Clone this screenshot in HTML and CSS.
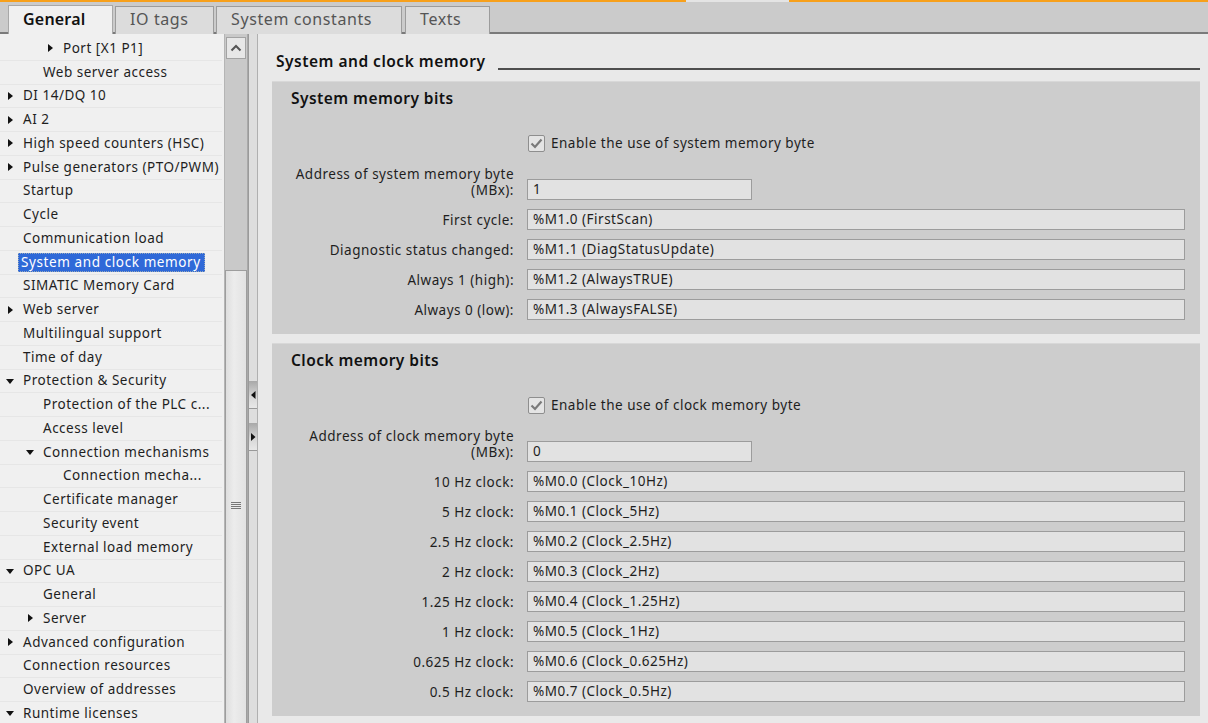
FILE: index.html
```html
<!DOCTYPE html>
<html>
<head>
<meta charset="utf-8">
<link rel="stylesheet" href="styles.css">
</head>
<body>
<div class="app">
  <div class="accent">
    <div class="accent-seg accent-left"></div>
    <div class="accent-seg accent-gap"></div>
    <div class="accent-seg accent-right"></div>
  </div>
  <div class="tabbar">
    <div class="tab tab-active tab-general">General</div>
    <div class="tab tab-io">IO tags</div>
    <div class="tab tab-sys">System constants</div>
    <div class="tab tab-texts">Texts</div>
  </div>
  <div class="main">
    <div class="sidebar">
      <ul class="tree">
        <li class="node l2"><span class="tw right"></span><span class="txt">Port [X1 P1]</span></li>
        <li class="node l1"><span class="tw"></span><span class="txt">Web server access</span></li>
        <li class="node l0"><span class="tw right"></span><span class="txt">DI 14/DQ 10</span></li>
        <li class="node l0"><span class="tw right"></span><span class="txt">AI 2</span></li>
        <li class="node l0"><span class="tw right"></span><span class="txt">High speed counters (HSC)</span></li>
        <li class="node l0"><span class="tw right"></span><span class="txt">Pulse generators (PTO/PWM)</span></li>
        <li class="node l0"><span class="tw"></span><span class="txt">Startup</span></li>
        <li class="node l0"><span class="tw"></span><span class="txt">Cycle</span></li>
        <li class="node l0"><span class="tw"></span><span class="txt">Communication load</span></li>
        <li class="node l0"><span class="tw"></span><span class="txt selected">System and clock memory</span></li>
        <li class="node l0"><span class="tw"></span><span class="txt">SIMATIC Memory Card</span></li>
        <li class="node l0"><span class="tw right"></span><span class="txt">Web server</span></li>
        <li class="node l0"><span class="tw"></span><span class="txt">Multilingual support</span></li>
        <li class="node l0"><span class="tw"></span><span class="txt">Time of day</span></li>
        <li class="node l0"><span class="tw down"></span><span class="txt">Protection &amp; Security</span></li>
        <li class="node l1"><span class="tw"></span><span class="txt">Protection of the PLC c...</span></li>
        <li class="node l1"><span class="tw"></span><span class="txt">Access level</span></li>
        <li class="node l1"><span class="tw down"></span><span class="txt">Connection mechanisms</span></li>
        <li class="node l2"><span class="tw"></span><span class="txt">Connection mecha...</span></li>
        <li class="node l1"><span class="tw"></span><span class="txt">Certificate manager</span></li>
        <li class="node l1"><span class="tw"></span><span class="txt">Security event</span></li>
        <li class="node l1"><span class="tw"></span><span class="txt">External load memory</span></li>
        <li class="node l0"><span class="tw down"></span><span class="txt">OPC UA</span></li>
        <li class="node l1"><span class="tw"></span><span class="txt">General</span></li>
        <li class="node l1"><span class="tw right"></span><span class="txt">Server</span></li>
        <li class="node l0"><span class="tw right"></span><span class="txt">Advanced configuration</span></li>
        <li class="node l0"><span class="tw"></span><span class="txt">Connection resources</span></li>
        <li class="node l0"><span class="tw"></span><span class="txt">Overview of addresses</span></li>
        <li class="node l0"><span class="tw down"></span><span class="txt">Runtime licenses</span></li>
      </ul>
    </div>
    <div class="vscroll">
      <div class="sbtn">
        <svg width="12" height="8" viewBox="0 0 12 8"><path d="M1.5 6.5 L6 2 L10.5 6.5" fill="none" stroke="#555" stroke-width="2"/></svg>
      </div>
      <div class="track"></div>
      <div class="thumb">
        <div class="grip"><span></span><span></span><span></span><span></span></div>
      </div>
    </div>
    <div class="splitter">
      <div class="split-btns">
        <div class="split-btn"><svg width="5" height="8" viewBox="0 0 5 8"><path d="M4.5 0 L0 4 L4.5 8 Z" fill="#111"/></svg></div>
        <div class="split-btn"><svg width="5" height="8" viewBox="0 0 5 8"><path d="M0 0 L4.5 4 L0 8 Z" fill="#111"/></svg></div>
      </div>
    </div>
    <div class="content">
      <div class="heading">
        <span class="heading-text">System and clock memory</span>
        <span class="heading-line"></span>
      </div>

      <section class="group">
        <div class="group-title">System memory bits</div>
        <div class="form">
          <div class="cell-empty"></div>
          <label class="check">
            <span class="box"><svg width="13" height="11" viewBox="0 0 13 11"><path d="M1.5 5.5 L5 9 L11.5 1.5" fill="none" stroke="#7a7a7a" stroke-width="2.2"/></svg></span>
            <span>Enable the use of system memory byte</span>
          </label>
          <div class="lbl lbl-2">Address of system memory byte<br>(MBx):</div>
          <div class="inp inp-short">1</div>
          <div class="lbl">First cycle:</div>
          <div class="inp">%M1.0 (FirstScan)</div>
          <div class="lbl">Diagnostic status changed:</div>
          <div class="inp">%M1.1 (DiagStatusUpdate)</div>
          <div class="lbl">Always 1 (high):</div>
          <div class="inp">%M1.2 (AlwaysTRUE)</div>
          <div class="lbl">Always 0 (low):</div>
          <div class="inp">%M1.3 (AlwaysFALSE)</div>
        </div>
      </section>

      <section class="group">
        <div class="group-title">Clock memory bits</div>
        <div class="form">
          <div class="cell-empty"></div>
          <label class="check">
            <span class="box"><svg width="13" height="11" viewBox="0 0 13 11"><path d="M1.5 5.5 L5 9 L11.5 1.5" fill="none" stroke="#7a7a7a" stroke-width="2.2"/></svg></span>
            <span>Enable the use of clock memory byte</span>
          </label>
          <div class="lbl lbl-2">Address of clock memory byte<br>(MBx):</div>
          <div class="inp inp-short">0</div>
          <div class="lbl">10 Hz clock:</div>
          <div class="inp">%M0.0 (Clock_10Hz)</div>
          <div class="lbl">5 Hz clock:</div>
          <div class="inp">%M0.1 (Clock_5Hz)</div>
          <div class="lbl">2.5 Hz clock:</div>
          <div class="inp">%M0.2 (Clock_2.5Hz)</div>
          <div class="lbl">2 Hz clock:</div>
          <div class="inp">%M0.3 (Clock_2Hz)</div>
          <div class="lbl">1.25 Hz clock:</div>
          <div class="inp">%M0.4 (Clock_1.25Hz)</div>
          <div class="lbl">1 Hz clock:</div>
          <div class="inp">%M0.5 (Clock_1Hz)</div>
          <div class="lbl">0.625 Hz clock:</div>
          <div class="inp">%M0.6 (Clock_0.625Hz)</div>
          <div class="lbl">0.5 Hz clock:</div>
          <div class="inp">%M0.7 (Clock_0.5Hz)</div>
        </div>
      </section>
    </div>
  </div>
</div>
</body>
</html>
```

FILE: styles.css
```css
* { box-sizing: border-box; }
html, body { margin: 0; padding: 0; }
body {
  width: 1208px;
  height: 723px;
  overflow: hidden;
  font-family: "Noto Sans", "Open Sans", sans-serif;
  font-size: 13.5px;
  letter-spacing: 0.5px;
  color: #1e1e1e;
  background: #e9e9e9;
}
.app { display: flex; flex-direction: column; height: 723px; }

.accent { display: flex; height: 2px; flex: none; }
.accent-left { width: 686px; background: #f7a01b; }
.accent-gap { width: 103px; background: #e4e4e4; }
.accent-right { flex: 1; background: #f7a01b; }

.tabbar {
  height: 32px;
  flex: none;
  background: #cbcbcb;
  border-bottom: 2px solid #7a7a7a;
  display: flex;
  align-items: flex-end;
  padding-left: 8px;
  gap: 2px;
}
.tab {
  height: 28px;
  margin-bottom: -2px;
  border: 1px solid #9c9c9c;
  border-bottom: none;
  background: #dcdcdc;
  color: #555;
  font-size: 16px;
  letter-spacing: 0.6px;
  line-height: 25px;
  padding-left: 14px;
  white-space: nowrap;
}
.tab-active {
  background: #f0f0f0;
  color: #111;
  font-weight: 600;
  letter-spacing: 0.2px;
  height: 29px;
  line-height: 27px;
  border-color: #a8a8a8;
}
.tab-general { width: 105px; }
.tab-io { width: 99px; }
.tab-sys { width: 186px; }
.tab-texts { width: 85px; margin-left: 1px; }

.main { flex: 1; display: flex; min-height: 0; }

.sidebar {
  width: 224px;
  flex: none;
  background: #f0f0f0;
  overflow: hidden;
  padding-top: 3px;
}
.tree { list-style: none; margin: 0; padding: 0; }
.node {
  height: 23.75px;
  display: flex;
  align-items: center;
  border-bottom: 1px solid #e6e6e6;
  margin-right: 2px;
  white-space: nowrap;
}
.l0 { padding-left: 5px; }
.l1 { padding-left: 25px; }
.l2 { padding-left: 45px; }
.tw { width: 16px; height: 10px; flex: none; position: relative; }
.tw.right::before {
  content: "";
  position: absolute;
  left: 3px; top: 1px;
  border-left: 5px solid #111;
  border-top: 4px solid transparent;
  border-bottom: 4px solid transparent;
}
.tw.down::before {
  content: "";
  position: absolute;
  left: 1px; top: 3px;
  border-top: 5px solid #111;
  border-left: 4.5px solid transparent;
  border-right: 4.5px solid transparent;
}
.txt { padding: 1px 2px; line-height: 17px; }
.txt.selected {
  background: #2f69d8;
  color: #fff;
  outline: 1px dotted #9ab;
  outline-offset: -1px;
  margin-left: -3px;
  padding: 1px 4px 1px 3px;
  letter-spacing: 0.6px;
}

.vscroll {
  width: 24px;
  flex: none;
  background: #c9c9c9;
  border-left: 1px solid #b5b5b5;
  border-right: 1px solid #a9a9a9;
  display: flex;
  flex-direction: column;
  padding: 3px 1px 0 1px;
}
.sbtn {
  height: 22px;
  flex: none;
  background: #e7e7e7;
  border: 1px solid #a3a3a3;
  display: flex;
  align-items: center;
  justify-content: center;
}
.track { height: 211px; flex: none; }
.thumb {
  flex: 1;
  background: linear-gradient(to right, #dedede, #ececec 40%, #e2e2e2);
  border: 1px solid #9d9d9d;
  border-bottom: none;
  margin: 0 -1px;
  display: flex;
  justify-content: center;
  padding-top: 231px;
}
.grip { display: flex; flex-direction: column; gap: 1px; }
.grip span { display: block; width: 10px; height: 1px; background: #777; }

.splitter {
  width: 10px;
  flex: none;
  background: #dedede;
  border-left: 1px solid #9a9a9a;
  border-right: 1px solid #b0b0b0;
  padding-top: 347px;
}
.split-btns { display: flex; flex-direction: column; gap: 14px; }
.split-btn {
  height: 28px;
  background: linear-gradient(to bottom, #a8a8a8, #d8d8d8 60%, #e8e8e8);
  border-bottom: 1px solid #999;
  display: flex;
  align-items: center;
  justify-content: center;
}

.content {
  flex: 1;
  padding: 18px 8px 0 14px;
  background: #e9e9e9;
  overflow: hidden;
}
.heading { display: flex; align-items: flex-end; height: 18px; margin-bottom: 11px; padding-left: 4px; }
.heading-text { font-size: 15.5px; font-weight: 600; line-height: 18px; color: #111; letter-spacing: 0.5px; }
.heading-line { flex: 1; margin-left: 13px; border-bottom: 2px solid #4e4e4e; margin-bottom: 0; }

.group {
  background: #cdcdcd;
  border-top: 1px solid #d8d8d8;
  padding: 7px 15px 14px 0;
  margin-bottom: 9px;
}
.group-title {
  font-size: 15.5px;
  font-weight: 600;
  line-height: 18px;
  letter-spacing: 0.45px;
  padding-left: 19px;
  margin-bottom: 24px;
  color: #111;
}
.form {
  display: grid;
  grid-template-columns: 242px 1fr;
  column-gap: 13px;
  row-gap: 9px;
  align-items: center;
}
.check { display: flex; align-items: center; height: 24px; gap: 6px; margin-left: 1px; margin-bottom: 2px; align-self: start; }
.box {
  width: 17px; height: 17px;
  border: 1px solid #8e8e8e;
  border-radius: 2px;
  background: #e4e4e4;
  display: flex; align-items: center; justify-content: center;
}
.lbl { text-align: right; line-height: 16px; white-space: nowrap; }
.lbl-2 { align-self: end; padding-bottom: 2px; }
.inp {
  height: 21px;
  background: #e2e2e2;
  border: 1px solid #9c9c9c;
  padding-left: 5px;
  line-height: 19px;
  white-space: nowrap;
}
.inp-short { width: 225px; align-self: end; }
```
